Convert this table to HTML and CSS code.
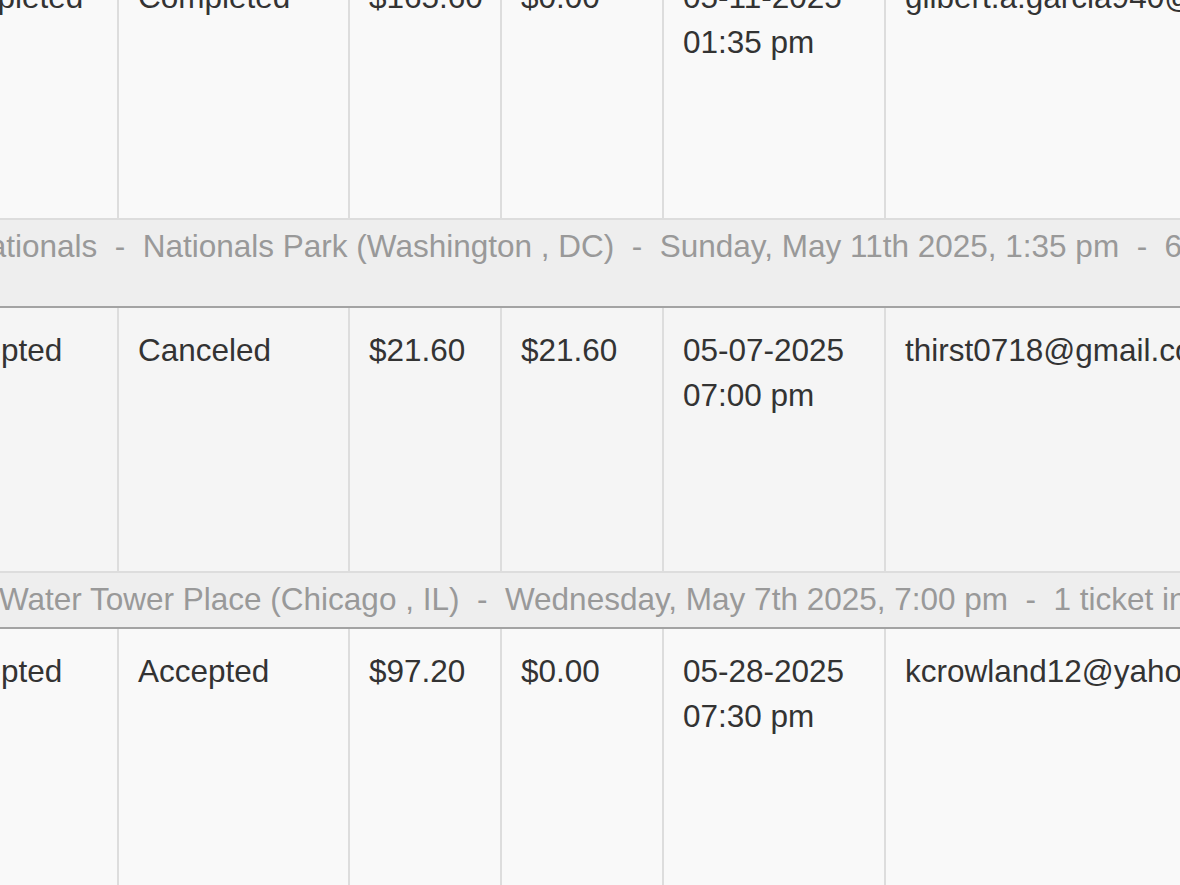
FILE: index.html
```html
<!DOCTYPE html>
<html lang="en">
<head>
<meta charset="utf-8">
<title>Orders</title>
<link rel="stylesheet" href="styles.css">
</head>
<body>
<div class="viewport">
  <div class="orders">
    <div class="row odd">
      <div class="cell">#48213</div>
      <div class="cell">Completed</div>
      <div class="cell">Completed</div>
      <div class="cell">$165.60</div>
      <div class="cell">$0.00</div>
      <div class="cell">05-11-2025<br>01:35 pm</div>
      <div class="cell">gilbert.a.garcia940@gmail.com</div>
      <div class="cell"></div>
    </div>
    <div class="group group-a">
      <div class="group-title">Washington Nationals &nbsp;-&nbsp; Nationals Park (Washington , DC) &nbsp;-&nbsp; Sunday, May 11th 2025, 1:35 pm &nbsp;-&nbsp; 6 tickets in Section 112</div>
      <div class="group-extra"></div>
    </div>
    <div class="row even">
      <div class="cell">#47980</div>
      <div class="cell">Accepted</div>
      <div class="cell">Canceled</div>
      <div class="cell">$21.60</div>
      <div class="cell">$21.60</div>
      <div class="cell">05-07-2025<br>07:00 pm</div>
      <div class="cell">thirst0718@gmail.com</div>
      <div class="cell"></div>
    </div>
    <div class="group group-b">
      <div class="group-title">Water Tower Place (Chicago , IL) &nbsp;-&nbsp; Wednesday, May 7th 2025, 7:00 pm &nbsp;-&nbsp; 1 ticket in General Admission</div>
    </div>
    <div class="row odd">
      <div class="cell">#48377</div>
      <div class="cell">Accepted</div>
      <div class="cell">Accepted</div>
      <div class="cell">$97.20</div>
      <div class="cell">$0.00</div>
      <div class="cell">05-28-2025<br>07:30 pm</div>
      <div class="cell">kcrowland12@yahoo.com</div>
      <div class="cell"></div>
    </div>
  </div>
</div>
</body>
</html>
```

FILE: styles.css
```css
html, body {
  margin: 0;
  padding: 0;
  overflow: hidden;
  background: #ffffff;
}

.viewport {
  width: 1180px;
  height: 885px;
  overflow: hidden;
}

.orders {
  width: 1900px;
  margin-left: -300px;
  margin-top: -45px;
  font-family: "Liberation Sans", Arial, sans-serif;
  font-size: 31.5px;
  line-height: 45px;
  color: #333333;
}

.row {
  display: grid;
  grid-template-columns: 210px 207px 231px 152px 162px 222px 400px 316px;
  height: 263px;
}

.row.odd {
  background: #f9f9f9;
}

.row.even {
  background: #f5f5f5;
}

.cell {
  box-sizing: border-box;
  border-left: 2px solid #dddddd;
  padding: 20px 18px 0 19px;
  white-space: nowrap;
  overflow: hidden;
}

.group {
  background: #eeeeee;
  border-top: 2px solid #dddddd;
  border-bottom: 2px solid #a3a3a3;
  color: #999999;
  padding: 4px 0 5px 0;
  white-space: nowrap;
}

.group-a .group-title {
  padding-left: 92px;
}

.group-b .group-title {
  padding-left: 299px;
}

.group-extra {
  height: 32px;
}
```
